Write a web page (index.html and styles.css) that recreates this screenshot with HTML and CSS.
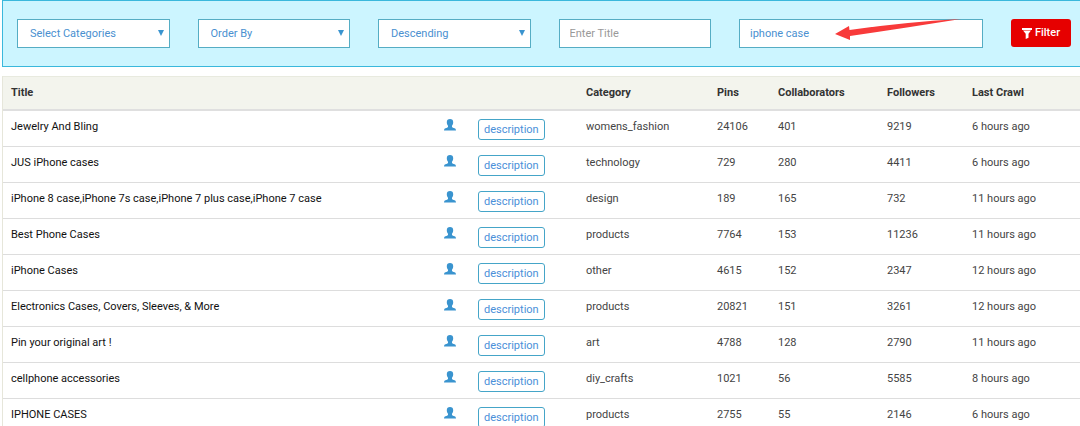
FILE: index.html
```html
<!DOCTYPE html>
<html lang="en">
<head>
<meta charset="utf-8">
<meta name="viewport" content="width=device-width, initial-scale=1">
<title>Boards</title>
<link rel="stylesheet" href="styles.css">
</head>
<body>
<svg class="sprite" aria-hidden="true">
  <symbol id="user" viewBox="0 0 12 12"><path d="M6 0C3.900 0 2.800 1.200 2.800 3.200c0 1.500.500 2.700 1.200 3.500v1.400C3.800 8.600 2.500 8.900 1.500 9.300.500 9.700.100 10.300 0 11.600h12c-.100-1.300-.500-1.900-1.500-2.300-1-.400-2.300-.700-2.500-1.200V6.700c.700-.800 1.200-2 1.200-3.500C9.200 1.200 8.100 0 6 0z"/></symbol>
  <symbol id="caret" viewBox="0 0 6 6"><path d="M0 0h6L3 6z"/></symbol>
</svg>
<main class="page">
  <form class="filters">
    <div class="picker">
      <select class="field select" aria-label="Category"><option>Select Categories</option></select>
      <svg class="caret" aria-hidden="true"><use href="#caret"/></svg>
    </div>
    <div class="picker">
      <select class="field select" aria-label="Order by"><option>Order By</option></select>
      <svg class="caret" aria-hidden="true"><use href="#caret"/></svg>
    </div>
    <div class="picker">
      <select class="field select" aria-label="Direction"><option>Descending</option></select>
      <svg class="caret" aria-hidden="true"><use href="#caret"/></svg>
    </div>
    <input class="field" type="text" placeholder="Enter Title" aria-label="Title">
    <div class="picker">
      <input class="field" type="text" value="iphone case" aria-label="Keyword">
      <svg class="pointer" viewBox="0 0 126 21" aria-hidden="true"><path d="M0 15 14 7 14.500 11Q70 3 126 0Q70 9 15 17L15 21z"/></svg>
    </div>
    <button class="submit" type="button"><svg class="funnel" viewBox="0 0 10 11" aria-hidden="true"><path d="M0 0h10v2H0zM1 2.600h8L6.500 5.800V9.800L3.700 11V5.800z"/></svg>Filter</button>
  </form>
  <table class="boards">
    <thead>
      <tr><th class="title">Title</th><th class="owner"></th><th class="about"></th><th class="category">Category</th><th class="pins">Pins</th><th class="collaborators">Collaborators</th><th class="followers">Followers</th><th class="crawl">Last Crawl</th></tr>
    </thead>
    <tbody>
      <tr><td class="name">Jewelry And Bling</td><td><svg class="user" aria-hidden="true"><use href="#user"/></svg></td><td><button class="tag" type="button">description</button></td><td>womens_fashion</td><td>24106</td><td>401</td><td>9219</td><td>6 hours ago</td></tr>
      <tr><td class="name">JUS iPhone cases</td><td><svg class="user" aria-hidden="true"><use href="#user"/></svg></td><td><button class="tag" type="button">description</button></td><td>technology</td><td>729</td><td>280</td><td>4411</td><td>6 hours ago</td></tr>
      <tr><td class="name">iPhone 8 case,iPhone 7s case,iPhone 7 plus case,iPhone 7 case</td><td><svg class="user" aria-hidden="true"><use href="#user"/></svg></td><td><button class="tag" type="button">description</button></td><td>design</td><td>189</td><td>165</td><td>732</td><td>11 hours ago</td></tr>
      <tr><td class="name">Best Phone Cases</td><td><svg class="user" aria-hidden="true"><use href="#user"/></svg></td><td><button class="tag" type="button">description</button></td><td>products</td><td>7764</td><td>153</td><td>11236</td><td>11 hours ago</td></tr>
      <tr><td class="name">iPhone Cases</td><td><svg class="user" aria-hidden="true"><use href="#user"/></svg></td><td><button class="tag" type="button">description</button></td><td>other</td><td>4615</td><td>152</td><td>2347</td><td>12 hours ago</td></tr>
      <tr><td class="name">Electronics Cases, Covers, Sleeves, &amp; More</td><td><svg class="user" aria-hidden="true"><use href="#user"/></svg></td><td><button class="tag" type="button">description</button></td><td>products</td><td>20821</td><td>151</td><td>3261</td><td>12 hours ago</td></tr>
      <tr><td class="name">Pin your original art !</td><td><svg class="user" aria-hidden="true"><use href="#user"/></svg></td><td><button class="tag" type="button">description</button></td><td>art</td><td>4788</td><td>128</td><td>2790</td><td>11 hours ago</td></tr>
      <tr><td class="name">cellphone accessories</td><td><svg class="user" aria-hidden="true"><use href="#user"/></svg></td><td><button class="tag" type="button">description</button></td><td>diy_crafts</td><td>1021</td><td>56</td><td>5585</td><td>8 hours ago</td></tr>
      <tr><td class="name">IPHONE CASES</td><td><svg class="user" aria-hidden="true"><use href="#user"/></svg></td><td><button class="tag" type="button">description</button></td><td>products</td><td>2755</td><td>55</td><td>2146</td><td>6 hours ago</td></tr>
    </tbody>
  </table>
</main>
</body>
</html>
```
FILE: styles.css
```css
* { box-sizing: border-box; }
html { scrollbar-width: none; }
body {
  margin: 0;
  background: #fff;
  color: #444;
  font: 11px/16px Roboto, "Liberation Sans", sans-serif;
}
.sprite { position: absolute; width: 0; height: 0; }
.page { padding-left: 2px; }

.filters {
  display: grid;
  grid-template-columns: repeat(4, 5fr) 8fr 60px;
  gap: 28px;
  padding: 18px 9px 18px 14px;
  margin-bottom: 9px;
  border: 1px solid #3ab8dc;
  border-right: 0;
  background: #ccf5ff;
}
.picker { position: relative; }
.field {
  display: block;
  width: 100%;
  height: 29px;
  margin: 0;
  padding: 0 10px;
  border: 1px solid #55adc4;
  border-radius: 0;
  background: #fff;
  color: #4a90d0;
  font: inherit;
}
.field::placeholder { color: #999; opacity: 1; }
.select { appearance: none; padding: 0 12px; }
.caret {
  position: absolute;
  top: 11px;
  right: 6px;
  width: 6px;
  height: 6px;
  fill: #3a94cf;
  pointer-events: none;
}
.pointer {
  position: absolute;
  top: 0;
  left: 96px;
  width: 126px;
  height: 21px;
  fill: #f83a3a;
  pointer-events: none;
}
.submit {
  display: flex;
  align-items: center;
  justify-content: center;
  gap: 3px;
  height: 28px;
  padding: 0;
  border: 0;
  border-radius: 3px;
  background: #e60000;
  color: #fff;
  font: inherit;
  font-weight: 500;
}
.funnel { width: 10px; height: 11px; fill: #fff; }

.boards {
  width: 100%;
  table-layout: fixed;
  border-spacing: 0;
  border-left: 1px solid #e6e6da;
}
th, td { padding: 8px 8px 0; text-align: left; vertical-align: top; }
th {
  height: 35px;
  border-top: 1px solid #e8eadf;
  border-bottom: 2px solid #dfdfdf;
  background: #f3f4ed;
  color: #333;
  font-weight: 700;
}
td { height: 36px; border-bottom: 1px solid #ddd; }
.name { color: #111; }
.owner { width: 34px; }
.about { width: 108px; }
.category { width: 131px; }
.pins { width: 61px; }
.collaborators { width: 109px; }
.followers { width: 85px; }
.crawl { width: 116px; }
.user { display: block; width: 12px; height: 12px; fill: #3a94cf; }
.tag {
  display: block;
  height: 21px;
  padding: 0 5px;
  border: 1px solid #45a5c8;
  border-radius: 3px;
  background: #fff;
  color: #4a90d9;
  font: inherit;
}
```
